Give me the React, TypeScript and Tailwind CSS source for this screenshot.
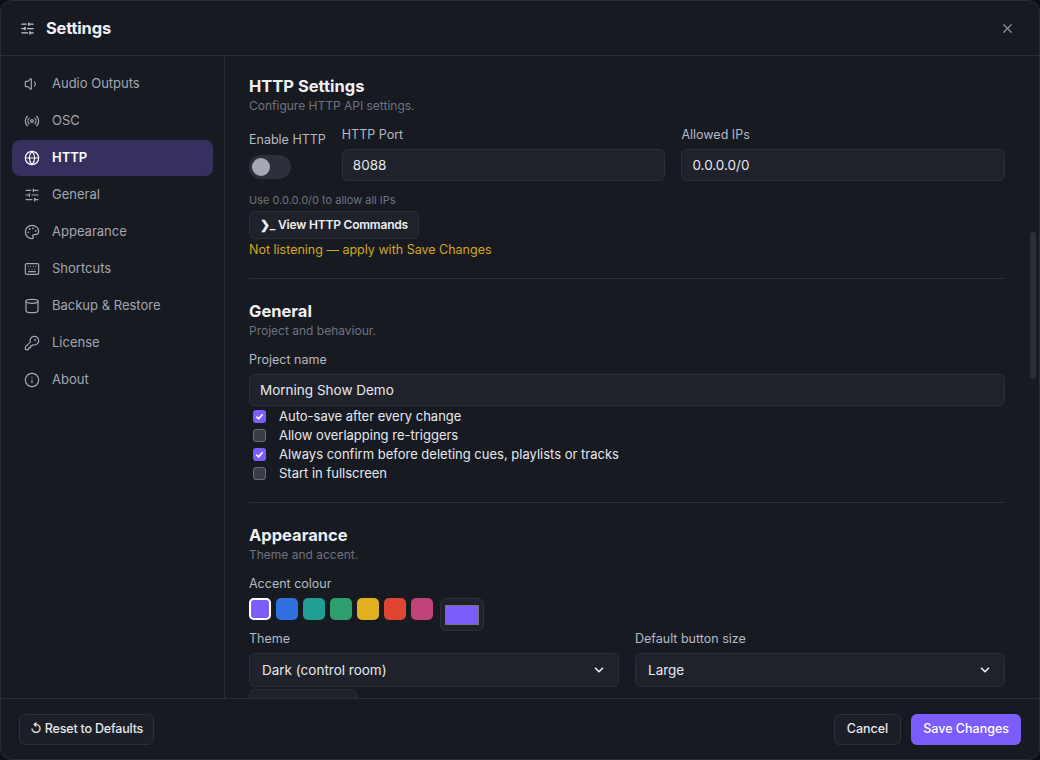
import React from 'react';
import { Volume1, Radio, Globe, SlidersHorizontal, Palette, Keyboard, Cylinder, KeyRound, Info, X, ChevronDown } from 'lucide-react';

const nav = [
  { label: 'Audio Outputs', icon: Volume1 },
  { label: 'OSC', icon: Radio },
  { label: 'HTTP', icon: Globe, active: true },
  { label: 'General', icon: SlidersHorizontal },
  { label: 'Appearance', icon: Palette },
  { label: 'Shortcuts', icon: Keyboard },
  { label: 'Backup & Restore', icon: Cylinder },
  { label: 'License', icon: KeyRound },
  { label: 'About', icon: Info },
];

const swatches = ['bg-[#7c5cfc]', 'bg-[#2f6fe0]', 'bg-[#1f9e94]', 'bg-[#2f9e6e]', 'bg-[#e0b020]', 'bg-[#e04432]', 'bg-[#c0447a]'];

const checks = [
  { label: 'Auto-save after every change', on: true },
  { label: 'Allow overlapping re-triggers', on: false },
  { label: 'Always confirm before deleting cues, playlists or tracks', on: true },
  { label: 'Start in fullscreen', on: false },
];

const inputCls = 'h-8 w-full rounded-md border border-[#2c303b] bg-[#1f222b] px-2.5 text-[13.5px] text-[#e6e8ee] flex items-center';

function Check({ on }: { on: boolean }) {
  return on ? (
    <span className="w-[13px] h-[13px] rounded-[3px] bg-[#7c5cfc] flex items-center justify-center">
      <svg width="9" height="9" viewBox="0 0 10 10"><path d="M1.5 5.2 4 7.5 8.5 2.5" stroke="white" strokeWidth="1.8" fill="none" /></svg>
    </span>
  ) : (
    <span className="w-[13px] h-[13px] rounded-[3px] bg-[#3a3d44] border border-[#6a6d74]" />
  );
}

function Section({ title, sub, children }: { title: string; sub: string; children: React.ReactNode }) {
  return (
    <div>
      <div className="text-[16.5px] font-bold text-[#eef0f4] leading-6">{title}</div>
      <div className="text-[12px] text-[#6e7380] leading-4">{sub}</div>
      {children}
    </div>
  );
}

export default function App() {
  return (
    <div className="w-[1040px] h-[760px] bg-[#0d0f13] overflow-hidden" style={{ fontFamily: 'Inter, "Noto Sans", sans-serif' }}>
      <div className="w-full h-full rounded-xl border border-[#2a2e39] bg-[#171a21] flex flex-col overflow-hidden">
        {/* Header */}
        <div className="h-[55px] shrink-0 border-b border-[#2a2e39] flex items-center pl-[19px] pr-5 gap-[11px]">
          <SlidersHorizontal size={15} className="text-[#c6c9d0]" />
          <span className="text-[16.5px] font-bold text-[#eef0f4] tracking-[-0.2px]">Settings</span>
          <X size={15} className="ml-auto mr-[4px] text-[#8a8f9b]" />
        </div>
        <div className="flex flex-1 min-h-0">
          {/* Sidebar */}
          <div className="w-[224px] shrink-0 border-r border-[#2a2e39] px-[11px] py-[10px] flex flex-col gap-px">
            {nav.map(n => (
              <div key={n.label} className={`h-9 rounded-lg flex items-center gap-[12px] px-3 text-[13px] ${n.active ? 'bg-[#35305e] text-white font-semibold' : 'text-[#a3a7b2]'}`}>
                <n.icon size={16} strokeWidth={1.8} />
                <span>{n.label}</span>
              </div>
            ))}
          </div>
          {/* Content */}
          <div className="flex-1 relative overflow-hidden">
            <div className="pl-6 pr-[34px] pt-[18px] flex flex-col">
              <Section title="HTTP Settings" sub="Configure HTTP API settings.">
                <div className="flex gap-4 mt-[13px] items-start">
                  <div className="flex flex-col">
                    <span className="text-[12.5px] leading-4 text-[#b5b9c3] mt-[5px]">Enable HTTP</span>
                    <span className="mt-[7px] w-[42px] h-6 rounded-full bg-[#2c303a] flex items-center px-[3px]">
                      <span className="w-[18px] h-[18px] rounded-full bg-[#a5a9b6]" />
                    </span>
                  </div>
                  <div className="flex-1 flex flex-col gap-[6px]">
                    <span className="text-[12.5px] leading-4 text-[#b5b9c3]">HTTP Port</span>
                    <div className={inputCls}>8088</div>
                  </div>
                  <div className="flex-1 flex flex-col gap-[6px]">
                    <span className="text-[12.5px] leading-4 text-[#b5b9c3]">Allowed IPs</span>
                    <div className={inputCls}>0.0.0.0/0</div>
                  </div>
                </div>
                <div className="text-[11px] leading-4 text-[#6e7380] mt-[11px]">Use 0.0.0.0/0 to allow all IPs</div>
                <div className="mt-[3px] h-7 w-fit rounded-md border border-[#2c303b] bg-[#1f222b] px-2.5 flex items-center text-[12px] font-semibold tracking-[-0.2px] text-[#eef0f4]">❯_ View HTTP Commands</div>
                <div className="text-[12.5px] leading-4 text-[#d4a820] mt-[3px]">Not listening — apply with Save Changes</div>
              </Section>
              <div className="border-t border-[#2a2e39] mt-[20px] mb-[20px]" />
              <Section title="General" sub="Project and behaviour.">
                <div className="text-[12.5px] leading-4 text-[#b5b9c3] mt-[13px]">Project name</div>
                <div className={`${inputCls} mt-[6px]`}>Morning Show Demo</div>
                <div className="flex flex-col mt-[1px]">
                  {checks.map(c => (
                    <div key={c.label} className="h-[19px] flex items-center gap-[13px] pl-[4px] text-[13px] text-[#e6e8ee]">
                      <Check on={c.on} />
                      <span>{c.label}</span>
                    </div>
                  ))}
                </div>
              </Section>
              <div className="border-t border-[#2a2e39] mt-[19px] mb-[20px]" />
              <Section title="Appearance" sub="Theme and accent.">
                <div className="text-[12.5px] leading-4 text-[#b5b9c3] mt-[13px]">Accent colour</div>
                <div className="flex gap-[5px] mt-[6px] items-start">
                  {swatches.map((s, i) => (
                    <span key={s} className={`w-[22px] h-[22px] rounded-[5px] ${s} ${i === 0 ? 'ring-2 ring-white ring-inset' : ''}`} />
                  ))}
                  <span className="w-[44px] h-[33px] rounded-md border border-[#2c303b] bg-[#1f222b] flex items-center justify-center ml-[2px]">
                    <span className="w-[34px] h-[20px] bg-[#7c5cfc] border border-[#777]" />
                  </span>
                </div>
                <div className="flex gap-4">
                  {[['Theme', 'Dark (control room)'], ['Default button size', 'Large']].map(([l, v]) => (
                    <div key={l} className="flex-1 flex flex-col gap-[6px]">
                      <span className="text-[12.5px] leading-4 text-[#b5b9c3]">{l}</span>
                      <div className="h-[34px] rounded-md border border-[#2c303b] bg-[#1f222b] px-3 flex items-center text-[13.5px] text-[#e6e8ee]">
                        <span className="flex-1">{v}</span>
                        <ChevronDown size={14} strokeWidth={3} />
                      </div>
                    </div>
                  ))}
                </div>
                <div className="mt-[2px] h-8 w-fit rounded-md border border-[#2c303b] bg-[#1f222b] px-3 flex items-center text-[12.5px] font-medium text-[#eef0f4]">Go Fullscreen</div>
              </Section>
            </div>
            <div className="absolute right-[3px] top-[176px] w-[6px] h-[147px] rounded-full bg-[#2a2e38]" />
          </div>
        </div>
        {/* Footer */}
        <div className="h-[61px] shrink-0 border-t border-[#2a2e39] flex items-center px-[18px] gap-[10px]">
          <div className="h-[31px] rounded-md border border-[#2c303b] bg-[#1c1f27] px-2.5 flex items-center text-[12.5px] font-medium tracking-[-0.2px] text-[#e6e8ee]">↺ Reset to Defaults</div>
          <div className="ml-auto h-[31px] rounded-md border border-[#2c303b] bg-[#1c1f27] px-3 flex items-center text-[12.5px] font-medium text-[#e6e8ee]">Cancel</div>
          <div className="h-[31px] rounded-md bg-[#7c5cfc] px-3 flex items-center text-[12.5px] font-medium text-white">Save Changes</div>
        </div>
      </div>
    </div>
  );
}
